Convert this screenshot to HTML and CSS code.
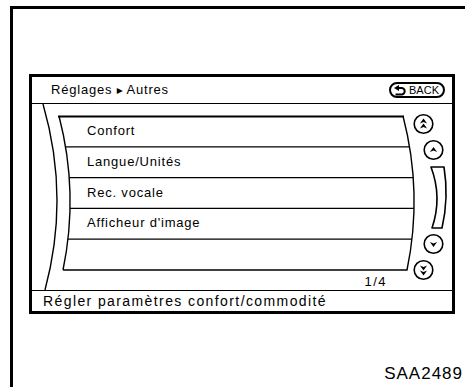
FILE: index.html
```html
<!DOCTYPE html>
<html>
<head>
<meta charset="utf-8">
<title>Réglages - Autres</title>
<link rel="stylesheet" href="styles.css">
</head>
<body>
<div class="frame">
  <div class="screen">
    <div class="head">
      <span class="crumb">Réglages <span class="sep">▸</span> Autres</span>
      <span class="back">
        <svg class="back-icon" width="12" height="11" viewBox="0 0 12 11">
          <path d="M4 3 H7.5 A3.2 3.2 0 0 1 7.5 9.4 H1.5" fill="none" stroke="#000" stroke-width="2"/>
          <polygon points="0,3 5,0 5,6" fill="#000"/>
        </svg>BACK</span>
    </div>
    <div class="main">
      <!-- curved list drum and scroll controls -->
      <svg class="drum" width="420" height="186" viewBox="0 0 420 186">
        <defs>
          <clipPath id="band"><path d="M27 12 Q47 89 31 166 L375 166 Q391 89 371 12 Z"/></clipPath>
          <path id="ah" d="M0 -3 L3.6 2 L0 0.6 L-3.6 2 Z"/>
        </defs>
        <path d="M11 0 Q38 93 13 186" fill="none" stroke="#000" stroke-width="1.4"/>
        <g clip-path="url(#band)" stroke="#000" stroke-width="1.3">
          <line x1="0" x2="420" y1="42.8" y2="42.8"/>
          <line x1="0" x2="420" y1="73.6" y2="73.6"/>
          <line x1="0" x2="420" y1="104.4" y2="104.4"/>
          <line x1="0" x2="420" y1="135.2" y2="135.2"/>
        </g>
        <path d="M31 166 Q47 89 27 12 M371 12 Q391 89 375 166 L31 166" fill="none" stroke="#000" stroke-width="1.4"/>
        <line x1="26" x2="372" y1="12.5" y2="12.5" stroke="#000" stroke-width="2"/>
        <g fill="none" stroke="#000" stroke-width="1.6" stroke-linejoin="round">
          <circle cx="391.5" cy="20" r="9.3"/>
          <circle cx="401.5" cy="46" r="9.3"/>
          <circle cx="401.5" cy="140" r="9.3"/>
          <circle cx="391.5" cy="166" r="9.3"/>
          <path d="M399 63 L412 63 Q417 93.5 410 124 L400 124 Q410.5 93.5 399 63 Z"/>
        </g>
        <g fill="#000">
          <use href="#ah" transform="translate(391.5 17.5)"/>
          <use href="#ah" transform="translate(391.5 22.5)"/>
          <use href="#ah" transform="translate(401.5 46)"/>
          <use href="#ah" transform="translate(401.5 140) rotate(180)"/>
          <use href="#ah" transform="translate(391.5 163.5) rotate(180)"/>
          <use href="#ah" transform="translate(391.5 168.5) rotate(180)"/>
        </g>
      </svg>
      <div class="rows">
        <div class="row">Confort</div>
        <div class="row">Langue/Unités</div>
        <div class="row">Rec. vocale</div>
        <div class="row">Afficheur d'image</div>
        <div class="row"></div>
      </div>
      <div class="page">1/4</div>
    </div>
    <div class="status">Régler paramètres confort/commodité</div>
  </div>
  <div class="code">SAA2489</div>
</div>
</body>
</html>
```

FILE: styles.css
```css
html, body {
  margin: 0;
  padding: 0;
  background: #fff;
}
body {
  color: #000;
  font-family: "Liberation Sans", Arial, Helvetica, sans-serif;
  font-size: 13px;
}
.frame {
  box-sizing: border-box;
  height: calc(100vh - 6px);
  margin: 6px 0 0 10px;
  border-left: 3px solid #000;
  border-top: 3px solid #000;
  overflow: hidden;
}
.screen {
  box-sizing: border-box;
  width: 426px;
  height: 240px;
  margin: 65px 0 0 16px;
  border: 3px solid #000;
  display: flex;
  flex-direction: column;
}
.head {
  height: 26px;
  flex: none;
  border-bottom: 1px solid #000;
  display: flex;
  align-items: center;
  justify-content: space-between;
  padding: 0 7px 0 19px;
}
.crumb {
  line-height: 26px;
  letter-spacing: 0.8px;
}
.sep {
  font-family: "DejaVu Sans", sans-serif;
  font-size: 12px;
  letter-spacing: 0;
}
.back {
  box-sizing: border-box;
  height: 16px;
  border: 2px solid #000;
  border-radius: 9px;
  padding: 0 4px 0 3px;
  display: flex;
  align-items: center;
  gap: 3px;
  font-size: 11px;
  line-height: 12px;
}
.back-icon {
  display: block;
}
.main {
  flex: 1;
  position: relative;
}
.drum {
  position: absolute;
  left: 0;
  top: 0;
}
.rows {
  position: relative;
  padding-top: 12px;
}
.row {
  height: 30.8px;
  line-height: 30.8px;
  padding-left: 55px;
  letter-spacing: 0.8px;
}
.page {
  position: relative;
  margin-top: 5px;
  padding-right: 65px;
  text-align: right;
  line-height: 14px;
  letter-spacing: 1.5px;
}
.status {
  height: 20px;
  flex: none;
  border-top: 1px solid #000;
  line-height: 20px;
  padding-left: 11px;
  font-size: 14px;
  letter-spacing: 1.4px;
}
.code {
  margin-top: 50px;
  padding-right: 2px;
  text-align: right;
  font-size: 17px;
  line-height: 20px;
  letter-spacing: 1px;
}
```
